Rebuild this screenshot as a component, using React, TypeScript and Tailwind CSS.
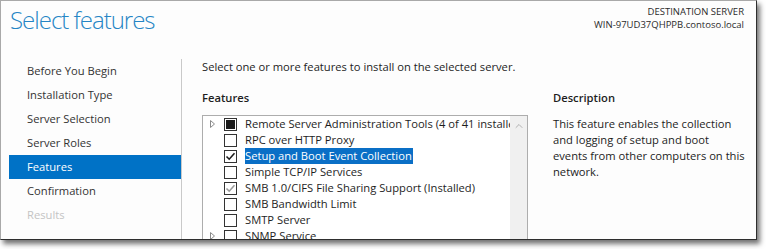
import { ChevronUp } from "lucide-react";

const steps = [
  { label: "Before You Begin" },
  { label: "Installation Type" },
  { label: "Server Selection" },
  { label: "Server Roles" },
  { label: "Features", active: true },
  { label: "Confirmation" },
  { label: "Results", disabled: true },
];

type Feature = {
  name: string;
  expand?: boolean;
  state?: "none" | "checked" | "partial" | "installed";
  selected?: boolean;
};

const features: Feature[] = [
  { name: "Remote Server Administration Tools (4 of 41 installed)", expand: true, state: "partial" },
  { name: "RPC over HTTP Proxy" },
  { name: "Setup and Boot Event Collection", state: "checked", selected: true },
  { name: "Simple TCP/IP Services" },
  { name: "SMB 1.0/CIFS File Sharing Support (Installed)", state: "installed" },
  { name: "SMB Bandwidth Limit" },
  { name: "SMTP Server" },
  { name: "SNMP Service", expand: true },
];

function Check({ color }: { color: string }) {
  return (
    <svg width="11" height="11" viewBox="0 0 11 11">
      <path d="M1.5 5.5 L4.2 8.2 L9.5 2.2" fill="none" stroke={color} strokeWidth="1.6" />
    </svg>
  );
}

function Checkbox({ state }: { state?: Feature["state"] }) {
  return (
    <div className="w-[13px] h-[13px] border border-[#333] bg-white flex items-center justify-center shrink-0">
      {state === "checked" && <Check color="#1a1a1a" />}
      {state === "installed" && <Check color="#9a9a9a" />}
      {state === "partial" && <div className="w-[9px] h-[9px] bg-[#1a1a1a]" />}
    </div>
  );
}

function FeatureRow({ f }: { f: Feature }) {
  return (
    <div className="h-4 flex items-center whitespace-nowrap">
      <div className="w-[21px] pl-[7px] flex items-center shrink-0">
        {f.expand && (
          <svg width="5" height="8" viewBox="0 0 5 8">
            <path d="M0.5 0.5 L4.5 4 L0.5 7.5 Z" fill="none" stroke="#8a8a8a" strokeWidth="1" />
          </svg>
        )}
      </div>
      <Checkbox state={f.state} />
      <div className="w-2 shrink-0" />
      <span
        className={
          f.selected
            ? "h-4 flex items-center bg-[#0a6fc6] text-white pr-[1px]"
            : "h-4 flex items-center text-[#1e1e1e]"
        }
      >
        {f.name}
      </span>
    </div>
  );
}

export default function App() {
  return (
    <div
      className="w-[766px] h-[249px] bg-white text-[11.2px] text-[#1e1e1e]"
      style={{ fontFamily: '"Open Sans", "Noto Sans", sans-serif' }}
    >
      <div className="w-[757px] h-[240px] bg-[#fdfdfd] border-l border-t border-[#a9a9a9] border-r border-b border-r-[#2e2e2e] border-b-[#2e2e2e] shadow-[3px_4px_5px_rgba(0,0,0,0.55)] flex flex-col overflow-hidden">
        <header className="h-[58px] flex items-start justify-between pl-[9px] pr-[12px]">
          <h1 className="text-[24px] font-light tracking-[-1px] text-[#2585c5] leading-[32px] mt-[3px]">
            Select features
          </h1>
          <div className="text-right text-[9.5px] leading-[12.5px] text-[#2b2b2b] mt-[5px]">
            <div>DESTINATION SERVER</div>
            <div>WIN-97UD37QHPPB.contoso.local</div>
          </div>
        </header>
        <div className="flex flex-1 min-h-0">
          <nav className="w-[180px] pl-2 shrink-0">
            {steps.map((s) => (
              <div
                key={s.label}
                className={
                  s.active
                    ? "h-6 flex items-center pl-[18px] bg-[#0072c6] text-white"
                    : s.disabled
                    ? "h-6 flex items-center pl-[18px] text-[#c4c4c4]"
                    : "h-6 flex items-center pl-[18px] text-[#333]"
                }
              >
                {s.label}
              </div>
            ))}
          </nav>
          <div className="w-px bg-[#c9c9c9] shrink-0" />
          <main className="flex-1 pl-5">
            <p className="leading-4">Select one or more features to install on the selected server.</p>
            <div className="flex mt-[15px]">
              <section className="w-[326px] shrink-0">
                <h2 className="font-semibold leading-4">Features</h2>
                <div className="mt-[9px] h-[140px] border border-[#adadad] flex overflow-hidden bg-white">
                  <div className="flex-1 min-w-0 overflow-hidden">
                    {features.map((f) => (
                      <FeatureRow key={f.name} f={f} />
                    ))}
                  </div>
                  <div className="w-[17px] bg-[#f0f0f0] shrink-0 flex justify-center pt-[4px]">
                    <ChevronUp size={12} strokeWidth={1.5} className="text-[#9c9c9c]" />
                  </div>
                </div>
              </section>
              <section className="pl-[25px]">
                <h2 className="font-semibold leading-4">Description</h2>
                <p className="mt-[10px] leading-4 whitespace-nowrap">
                  This feature enables the collection
                  <br />
                  and logging of setup and boot
                  <br />
                  events from other computers on this
                  <br />
                  network.
                </p>
              </section>
            </div>
          </main>
        </div>
      </div>
    </div>
  );
}
